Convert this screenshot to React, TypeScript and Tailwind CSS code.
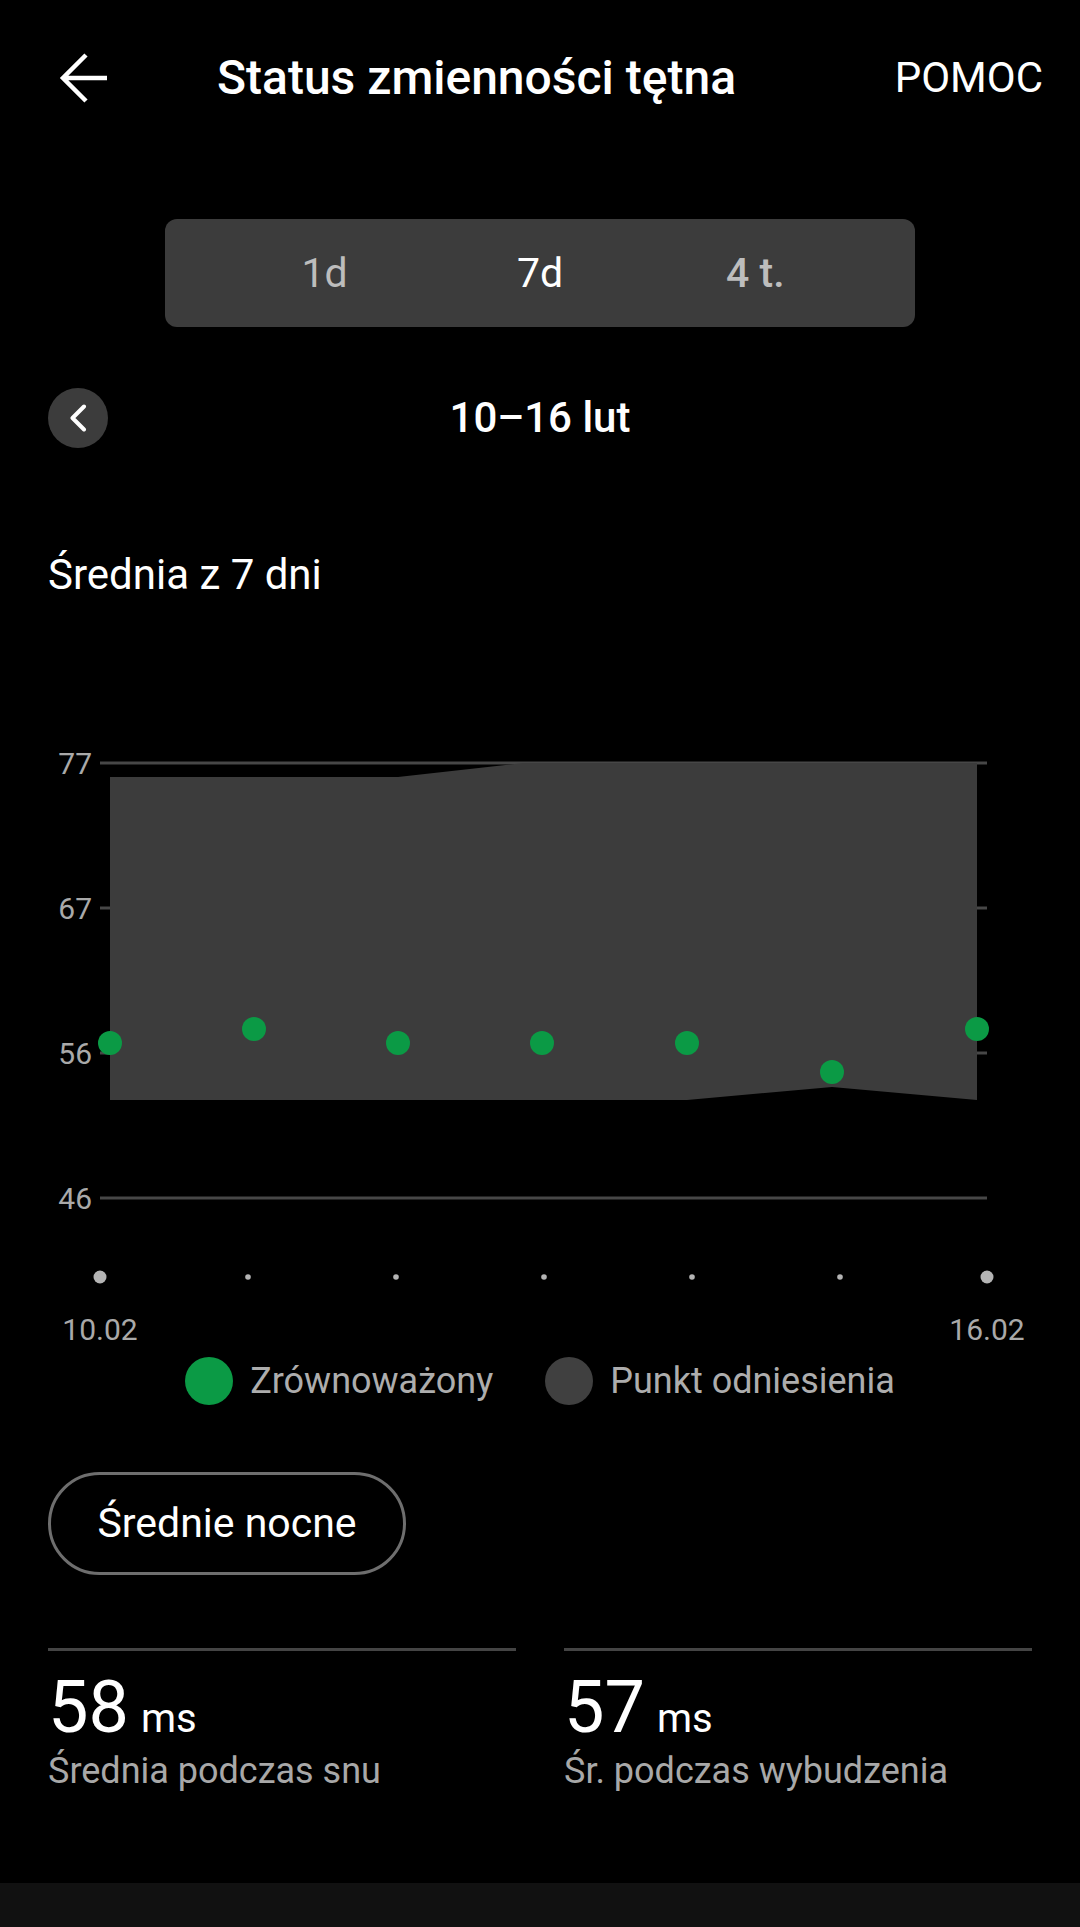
import React from 'react';

const GRID = [
  { label: '77', y: 23 },
  { label: '67', y: 168 },
  { label: '56', y: 313 },
  { label: '46', y: 458 },
];

const DOTS = [
  { x: 110, y: 303 },
  { x: 254, y: 289 },
  { x: 398, y: 303 },
  { x: 542, y: 303 },
  { x: 687, y: 303 },
  { x: 832, y: 332 },
  { x: 977, y: 289 },
];

const TICKS = [100, 248, 396, 544, 692, 840, 987];

function BackArrow() {
  return (
    <svg width="50" height="52" viewBox="0 0 50 52" fill="none">
      <path d="M48 26H4M27 3L4 26L27 49" stroke="#fff" strokeWidth="4.5" />
    </svg>
  );
}

function Chart() {
  return (
    <svg width="1080" height="610" viewBox="0 0 1080 610" className="block">
      {GRID.map((g) => (
        <g key={g.label}>
          <line x1="100" x2="987" y1={g.y} y2={g.y} stroke="#474747" strokeWidth="3" />
          <text
            x="92"
            y={g.y + 10.5}
            textAnchor="end"
            fontSize="30"
            fill="#a9a9a9"
            fontFamily="Roboto, sans-serif"
          >
            {g.label}
          </text>
        </g>
      ))}
      <polygon
        points="110,37 398,37 523,23 977,23 977,360 832,347 687,360 110,360"
        fill="#3c3c3c"
      />
      {DOTS.map((d, i) => (
        <circle key={i} cx={d.x} cy={d.y} r="12" fill="#0b9a45" />
      ))}
      {TICKS.map((x, i) => (
        <circle
          key={x}
          cx={x}
          cy="537"
          r={i === 0 || i === TICKS.length - 1 ? 6.5 : 2.8}
          fill="#b4b4b4"
        />
      ))}
      <text x="100" y="600" textAnchor="middle" fontSize="30" fill="#a9a9a9" fontFamily="Roboto, sans-serif">
        10.02
      </text>
      <text x="987" y="600" textAnchor="middle" fontSize="30" fill="#a9a9a9" fontFamily="Roboto, sans-serif">
        16.02
      </text>
    </svg>
  );
}

function Stat({ value, label }: { value: string; label: string }) {
  return (
    <div className="border-t-[3px] border-[#444] pt-[21px]">
      <div className="flex items-baseline">
        <span className="text-[72px] leading-none text-white">{value}</span>
        <span className="ml-[12px] text-[40px] leading-none text-white">ms</span>
      </div>
      <div className="mt-[9px] text-[36px] leading-none text-[#a8a8a8]">{label}</div>
    </div>
  );
}

export default function App() {
  return (
    <div className="flex h-[1927px] w-[1080px] flex-col overflow-hidden bg-black font-[Roboto,sans-serif] text-white">
      <header className="flex h-[156px] items-center pl-[59px] pr-[37px]">
        <BackArrow />
        <h1 className="ml-[108px] text-[48px] font-medium leading-none">Status zmienności tętna</h1>
        <button className="ml-auto text-[42px] leading-none">POMOC</button>
      </header>

      <div className="mx-auto mt-[63px] flex h-[108px] w-[750px] items-center rounded-[12px] bg-[#3c3c3c] px-[52px]">
        <div className="flex-1 text-center text-[41px] leading-none text-[#bdbdbd]">1d</div>
        <div className="flex-1 text-center text-[41px] leading-none text-white">7d</div>
        <div className="flex-1 text-center text-[41px] font-medium leading-none text-[#bdbdbd]">4 t.</div>
      </div>

      <div className="mt-[61px] grid grid-cols-[60px_1fr_60px] items-center px-[48px]">
        <button className="flex h-[60px] w-[60px] items-center justify-center rounded-full bg-[#3c3c3c]">
          <svg width="18" height="28" viewBox="0 0 18 28" fill="none">
            <path d="M15 2.5L3.5 14L15 25.5" stroke="#fff" strokeWidth="4" strokeLinecap="round" strokeLinejoin="round" />
          </svg>
        </button>
        <div className="text-center text-[42px] font-medium leading-none">10–16 lut</div>
        <div />
      </div>

      <div className="mt-[106px] pl-[48px] text-[42px] leading-none">Średnia z 7 dni</div>

      <div className="mt-[144px]">
        <Chart />
      </div>

      <div className="mt-[7px] flex h-[48px] items-center justify-center">
        <span className="h-[48px] w-[48px] rounded-full bg-[#0b9a45]" />
        <span className="ml-[17px] text-[36px] leading-none text-[#adadad]">Zrównoważony</span>
        <span className="ml-[52px] h-[48px] w-[48px] rounded-full bg-[#404040]" />
        <span className="ml-[17px] text-[36px] leading-none text-[#adadad]">Punkt odniesienia</span>
      </div>

      <button className="ml-[48px] mt-[67px] flex h-[103px] w-[358px] items-center justify-center rounded-full border-[3px] border-[#6e6e6e] text-[41px] leading-none">
        Średnie nocne
      </button>

      <div className="mt-[73px] grid grid-cols-2 gap-[48px] px-[48px]">
        <Stat value="58" label="Średnia podczas snu" />
        <Stat value="57" label="Śr. podczas wybudzenia" />
      </div>

      <div className="flex-1" />
      <div className="h-[44px] bg-[#111]" />
    </div>
  );
}
